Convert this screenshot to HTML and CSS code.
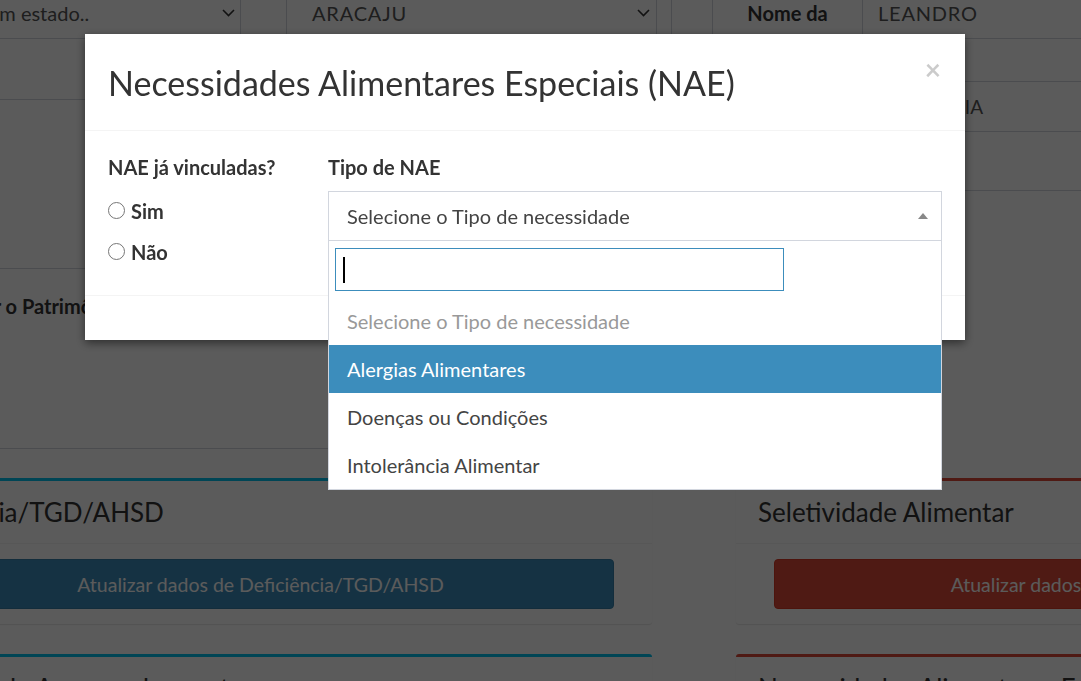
FILE: index.html
```html
<!DOCTYPE html>
<html lang="pt-BR">
<head>
    <meta charset="UTF-8">
    <meta name="viewport" content="width=device-width, initial-scale=1.0">
    <title>Cadastro do Aluno</title>
    <link rel="stylesheet" href="styles.css">
</head>
<body>
    <div class="page">
        <div class="filters">
            <div class="cell cell-estado">
                <span>Selecione um estado..</span>
                <svg class="chevron" width="13" height="8" viewBox="0 0 13 8"><polyline points="1,1 6.5,6.5 12,1" fill="none" stroke="#333" stroke-width="1.6"/></svg>
            </div>
            <div class="cell cell-blank"></div>
            <div class="cell cell-cidade">
                <span class="caps">ARACAJU</span>
                <svg class="chevron" width="13" height="8" viewBox="0 0 13 8"><polyline points="1,1 6.5,6.5 12,1" fill="none" stroke="#333" stroke-width="1.6"/></svg>
            </div>
            <div class="cell cell-gap"></div>
            <div class="cell cell-gap2"></div>
            <div class="cell cell-label">Nome da</div>
            <div class="cell cell-value"><span class="caps">LEANDRO</span></div>
        </div>

        <div class="details">
            <div class="details-left">
                <div class="row row-a"></div>
                <div class="row row-b"></div>
                <div class="row row-c"><strong>Informar o Patrimônio</strong></div>
            </div>
            <div class="details-right">
                <div class="row row-d"></div>
                <div class="row row-e"><span class="row-key"></span><span class="row-val">ANA MARIA</span></div>
                <div class="row row-f"></div>
            </div>
        </div>

        <div class="boxes">
            <div class="box box-info">
                <div class="box-header"><h3 class="box-title">Deficiência/TGD/AHSD</h3></div>
                <div class="box-body"><button class="btn btn-primary">Atualizar dados de Deficiência/TGD/AHSD</button></div>
            </div>
            <div class="box box-danger">
                <div class="box-header"><h3 class="box-title">Seletividade Alimentar</h3></div>
                <div class="box-body"><button class="btn btn-danger">Atualizar dados de Seletividade Alimentar</button></div>
            </div>
            <div class="box box-info">
                <div class="box-header"><h3 class="box-title">Histórico de Acompanhamento</h3></div>
            </div>
            <div class="box box-danger">
                <div class="box-header"><h3 class="box-title">Necessidades Alimentares Especiais</h3></div>
            </div>
        </div>
    </div>

    <div class="backdrop"></div>

    <div class="modal">
        <div class="modal-header">
            <h4 class="modal-title">Necessidades Alimentares Especiais (NAE)</h4>
            <span class="close">&times;</span>
        </div>
        <div class="modal-body">
            <div>
                <label class="field-label">NAE já vinculadas?</label>
                <label class="radio"><input type="radio" name="nae"> Sim</label>
                <label class="radio"><input type="radio" name="nae"> Não</label>
            </div>
            <div>
                <label class="field-label">Tipo de NAE</label>
                <div class="select2">
                    <div class="select2-selection">
                        <span>Selecione o Tipo de necessidade</span>
                        <b class="select2-arrow"></b>
                    </div>
                    <div class="select2-dropdown">
                        <div class="select2-search">
                            <div class="select2-search-field"><span class="caret"></span></div>
                        </div>
                        <ul class="select2-results">
                            <li class="option placeholder">Selecione o Tipo de necessidade</li>
                            <li class="option highlighted">Alergias Alimentares</li>
                            <li class="option">Doenças ou Condições</li>
                            <li class="option">Intolerância Alimentar</li>
                        </ul>
                    </div>
                </div>
            </div>
        </div>
        <div class="modal-footer"></div>
    </div>
</body>
</html>
```

FILE: styles.css
```css
body, html {
    margin: 0;
    height: 100%;
    overflow: hidden;
}

body {
    font-family: Lato, "Liberation Sans", sans-serif;
    font-size: 20px;
    color: #333;
    background: #fff;
}

.page {
    margin-left: -131px;
    width: 1700px;
}

/* filtros do topo */
.filters {
    display: flex;
    height: 50px;
    margin-top: -12px;
    border-bottom: 1px solid #d2d6de;
}

.cell {
    display: flex;
    align-items: center;
    border-right: 1px solid #d2d6de;
    box-sizing: border-box;
    color: #555;
}

.caps {
    letter-spacing: 0.8px;
}

.chevron {
    margin-left: auto;
}

.cell-estado {
    width: 372px;
    padding: 0 5px 0 30px;
}

.cell-blank { width: 46px; }

.cell-cidade {
    width: 370px;
    padding: 0 6px 0 25px;
}

.cell-gap { width: 15px; }
.cell-gap2 { width: 41px; }

.cell-label {
    width: 150px;
    justify-content: center;
    font-weight: bold;
    color: #333;
}

.cell-value {
    flex: 1;
    padding-left: 15px;
    border-right: none;
}

/* linhas de detalhes */
.details {
    display: grid;
    grid-template-columns: 844px 1fr;
}

.row {
    border-bottom: 1px solid #d2d6de;
    box-sizing: border-box;
}

.row-a { height: 61px; }
.row-b { height: 169px; }
.row-c {
    height: 180px;
    padding: 25px 0 0 55px;
}

.row-d { height: 43px; }
.row-e {
    height: 50px;
    display: flex;
    align-items: center;
    color: #555;
    font-size: 19px;
}
.row-key { width: 150px; }
.row-val { padding-left: 15px; }
.row-f { height: 59px; }

/* caixas */
.boxes {
    display: grid;
    grid-template-columns: 783px 783px;
    column-gap: 84px;
    margin-top: 29px;
}

.box {
    background: #fff;
    border-top: 3px solid #d2d6de;
    border-radius: 3px;
    box-shadow: 0 1px 1px rgba(0,0,0,0.1);
    margin-bottom: 30px;
}

.box-info { border-top-color: #00c0ef; }
.box-danger { border-top-color: #dd4b39; }

.box-header {
    padding: 14px 22px;
    border-bottom: 1px solid #f4f4f4;
}

.box-title {
    margin: 0;
    font-size: 26px;
    line-height: 34px;
    font-weight: normal;
}

.box-body {
    padding: 15px 38px;
}

.btn {
    display: block;
    width: 100%;
    height: 50px;
    border: 1px solid transparent;
    border-radius: 4px;
    color: #fff;
    font-family: inherit;
    font-size: 19.5px;
}

.btn-primary { background: #3c8dbc; border-color: #367fa9; }
.btn-danger { background: #dd4b39; border-color: #d73925; }

/* modal */
.backdrop {
    position: fixed;
    inset: 0;
    background: rgba(0,0,0,0.645);
}

.modal {
    position: fixed;
    top: 34px;
    left: 85px;
    width: 880px;
    background: #fff;
    box-shadow: 0 3px 9px rgba(0,0,0,0.5);
}

.modal-header {
    display: flex;
    justify-content: space-between;
    align-items: flex-start;
    padding: 25px 23px 23px;
    border-bottom: 1px solid #f4f4f4;
}

.modal-title {
    margin: 0;
    font-size: 34px;
    line-height: 48px;
    font-weight: normal;
}

.close {
    font-size: 28px;
    font-weight: bold;
    line-height: 24px;
    color: #000;
    opacity: 0.2;
    margin: -2px 1px 0 0;
}

.modal-body {
    display: grid;
    grid-template-columns: 220px 1fr;
    padding: 23px;
}

.modal-footer {
    height: 44px;
    border-top: 1px solid #f4f4f4;
}

.field-label {
    display: block;
    font-weight: bold;
    line-height: 26px;
    margin-bottom: 10px;
}

.modal-body > div:last-child .field-label {
    margin-bottom: 11px;
}

.radio {
    display: flex;
    align-items: center;
    gap: 6px;
    height: 41px;
    font-weight: bold;
}

.radio input {
    appearance: none;
    margin: 0;
    width: 17px;
    height: 17px;
    border: 1px solid #767676;
    border-radius: 50%;
    background: #fff;
}

/* select2 */
.select2 {
    position: relative;
}

.select2-selection {
    display: flex;
    align-items: center;
    height: 50px;
    box-sizing: border-box;
    padding: 0 13px 0 18px;
    border: 1px solid #d2d6de;
    color: #444;
}

.select2-arrow {
    margin-left: auto;
    border-style: solid;
    border-width: 0 5px 6px 5px;
    border-color: transparent transparent #888 transparent;
}

.select2-dropdown {
    position: absolute;
    top: 100%;
    left: 0;
    right: 0;
    background: #fff;
    border: 1px solid #d2d6de;
    border-top: none;
}

.select2-search {
    padding: 7px 6px 6px;
}

.select2-search-field {
    width: 449px;
    height: 43px;
    box-sizing: border-box;
    border: 1px solid #3c8dbc;
    display: flex;
    align-items: center;
    padding-left: 7px;
}

.caret {
    width: 2px;
    height: 26px;
    background: #000;
}

.select2-results {
    list-style: none;
    margin: 0;
    padding: 0;
}

.option {
    height: 48px;
    line-height: 48px;
    padding: 0 18px;
    color: #444;
}

.option.placeholder { color: #999; }

.option.highlighted {
    background: #3c8dbc;
    color: #fff;
}
```
